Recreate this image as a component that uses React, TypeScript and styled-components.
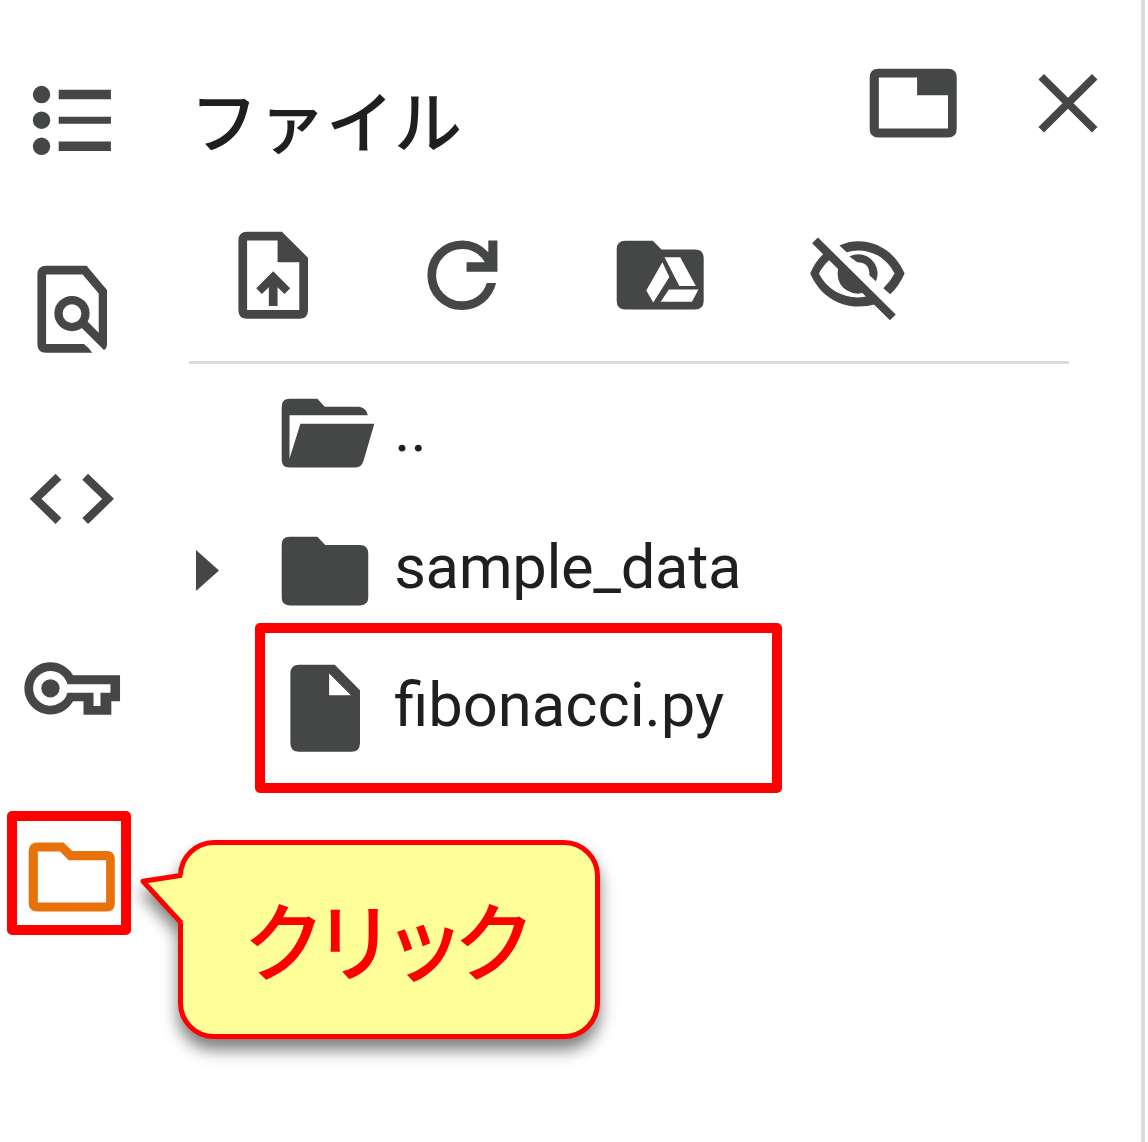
import React from "react";
import styled, { createGlobalStyle } from "styled-components";

const GlobalStyle = createGlobalStyle`
  body {
    margin: 0;
    background: #fff;
    overflow: hidden;
  }
`;

const ink = "#444746";
const red = "#ff0000";
const unit = 4.35;

const Page = styled.div`
  display: flex;
  width: 1148px;
  height: 1142px;
  background: #fff;
  color: #1f1f1f;
  font-family: Roboto, "Noto Sans CJK JP", sans-serif;
`;

const Rail = styled.nav`
  display: flex;
  flex-direction: column;
  width: 144px;
  padding-top: 25.4px;
  box-sizing: border-box;
`;

const RailItem = styled.div<{ $active?: boolean }>`
  position: relative;
  display: flex;
  align-items: center;
  justify-content: center;
  height: 189.2px;
  color: ${(p) => (p.$active ? "#e8710a" : ink)};
`;

const Glyph = styled.svg<{ $gap?: number }>`
  display: block;
  flex: none;
  width: ${24 * unit}px;
  height: ${24 * unit}px;
  margin-left: ${(p) => p.$gap ?? 0}px;
  fill: currentColor;
`;

const Marker = styled.div<{ $x: number; $y: number; $w: number; $h: number }>`
  position: absolute;
  left: ${(p) => p.$x}px;
  top: ${(p) => p.$y}px;
  width: ${(p) => p.$w}px;
  height: ${(p) => p.$h}px;
  box-sizing: border-box;
  border: 10px solid ${red};
  border-radius: 5px;
`;

const Panel = styled.main`
  display: flex;
  flex-direction: column;
  width: 1001px;
  height: 1142px;
  box-sizing: border-box;
  border-right: 4px solid #dddddd;
  color: ${ink};
`;

const Header = styled.header`
  display: flex;
  align-items: flex-start;
  height: 222.7px;
  box-sizing: border-box;
  padding: 50.8px 20.5px 0 46px;
`;

const Title = styled.h1`
  flex: 1;
  margin: 20px 0 0;
  color: #1f1f1f;
  font: 500 68px/96px "Noto Sans CJK JP", sans-serif;
`;

const Toolbar = styled.div`
  display: flex;
  height: 138.8px;
  padding-left: 77.1px;
`;

const Divider = styled.hr`
  flex: none;
  width: 880px;
  height: 3px;
  margin: 0 0 0 45px;
  border: 0;
  background: #dadada;
`;

const Row = styled.div`
  position: relative;
  display: flex;
  align-items: center;
  height: 137.3px;
  padding-left: 52.2px;
`;

const ArrowSlot = styled.span`
  display: flex;
  width: 76.6px;
`;

const Arrow = styled.svg`
  width: 23px;
  height: 41px;
  fill: currentColor;
`;

const Name = styled.span<{ $tracking?: string }>`
  margin: 0 0 6px 17px;
  color: #1f1f1f;
  font: 400 61.5px/80px Roboto, sans-serif;
  letter-spacing: ${(p) => p.$tracking ?? "normal"};
  white-space: nowrap;
`;

const Callout = styled.div`
  position: absolute;
  left: 178px;
  top: 840px;
  width: 422px;
  height: 199px;
  filter: drop-shadow(0 11px 8px rgba(0, 0, 0, 0.5));
`;

const Bubble = styled.div`
  display: flex;
  align-items: center;
  justify-content: center;
  height: 100%;
  box-sizing: border-box;
  border: 5px solid ${red};
  border-radius: 36px;
  background: #ffff99;
`;

const CalloutText = styled.span`
  margin: 0 12px 3px 0;
  color: ${red};
  font: 500 86px/120px "Noto Sans CJK JP", sans-serif;
  letter-spacing: -12.3px;
  transform: scaleX(0.95);
  white-space: nowrap;
`;

const Tail = styled.svg`
  position: absolute;
  left: -40px;
  top: 30px;
  width: 48px;
  height: 58px;
`;

type IconProps = { children: React.ReactNode; gap?: number };

const Icon = ({ children, gap }: IconProps) => (
  <Glyph viewBox="0 0 24 24" $gap={gap}>
    {children}
  </Glyph>
);

const ListIcon = () => (
  <Icon>
    <circle cx="4.95" cy="6.1" r="2" />
    <circle cx="4.95" cy="12" r="2" />
    <circle cx="4.95" cy="18" r="2" />
    <path d="M8.9 5h12v2.2h-12zM8.9 11.2h12v1.6h-12zM8.9 16.9h12v2.2h-12z" />
  </Icon>
);

const FindIcon = () => (
  <Icon>
    <path d="M6 2h9.3L20 7.6v12.4c0 .7-.2 1.1-.7 1.4l-5.5-5.5 1.5-1.3 2.8 2.8V8.4L14.4 4H6v16h8.7q1.1.8 1.9 2H6q-2 0-2-2V4q0-2 2-2z" />
    <circle cx="11.95" cy="13" r="3.1" fill="none" stroke="currentColor" strokeWidth="1.9" />
  </Icon>
);

const CodeIcon = () => (
  <Icon>
    <path
      d="M8.85 7.05 3.6 12.15l5.25 5.1M14.98 7.05 20.24 12.15l-5.26 5.1"
      fill="none"
      stroke="currentColor"
      strokeWidth="1.9"
    />
  </Icon>
);

const KeyIcon = () => (
  <Icon>
    <g transform="translate(0 .25)">
      <path
        fillRule="evenodd"
        d="M7 6a6 6 0 0 1 5.2 3H23v6h-2v3.1h-6.4V15h-2.4A6 6 0 1 1 7 6zm0 2a4 4 0 1 0 3.9 5h6v3.1h1.6V13H20.8v-1.9H10.9A4 4 0 0 0 7 8z"
      />
      <circle cx="7" cy="12" r="2.1" />
    </g>
  </Icon>
);

const FolderOutlineIcon = () => (
  <Icon>
    <path
      fillRule="evenodd"
      d="M4 4h6l2 2h8q1.8 0 1.8 2v10q0 1.9-1.8 1.9H4q-2 0-2-1.9V6q0-2 2-2zM4.1 6.1v11.7h15.7V8.1h-8.6l-2-2z"
    />
  </Icon>
);

const TabIcon = () => (
  <Icon>
    <path
      fillRule="evenodd"
      d="M4 4.1h16q2 0 2 2v11.8q0 2-2 2H4q-2 0-2-2V6.1q0-2 2-2zM4.1 6.1v11.7h15.9v-7.6h-7.1V6.1z"
    />
  </Icon>
);

const CloseIcon = () => (
  <Icon gap={50.4}>
    <path d="M5.8 5.9l12.3 12.2M18.1 5.9 5.8 18.1" fill="none" stroke="currentColor" strokeWidth="1.8" />
  </Icon>
);

const UploadIcon = () => (
  <Icon>
    <path
      fillRule="evenodd"
      d="M6 2h8l6 6v12q0 2-2 2H6q-2 0-2-2V4q0-2 2-2zm0 2v16h12V9h-5V4z"
    />
    <path d="M12 11.1 15.9 15l-1.3 1.3-1.6-1.5v4.3h-2v-4.3l-1.6 1.5L8.1 15z" />
  </Icon>
);

const RefreshIcon = () => (
  <Icon gap={84.4}>
    <path d="M12 20q-3.35 0-5.675-2.325T4 12t2.325-5.675T12 4q1.725 0 3.3.712T18 6.75V4h2.1v7.2H13V9h4.2q-.8-1.4-2.187-2.2T12 6Q9.5 6 7.75 7.75T6 12t1.75 4.25T12 18q1.925 0 3.475-1.1T17.65 13.8h2.15q-.75 2.85-2.9 4.525T12 20" />
  </Icon>
);

const DriveIcon = () => (
  <Icon gap={93.5}>
    <path d="M4 4.1h6.3l2 2H20q2 0 2 2v9.8q0 2-2 2H4q-2 0-2-2V6.1q0-2 2-2z" />
    <path
      fill="#fff"
      d="M13 7.9h3.6l3.6 6.6h-3.8zM12.5 9l1.6 3.4-3.7 5.9-1.6-2.8zM14 15.3h6.8l-1.5 2.8H12.1z"
    />
  </Icon>
);

const HiddenIcon = () => (
  <Icon gap={93.1}>
    <path d="M7.9 5.2Q10 4.2 12.2 4.2c4.7 0 8.6 2.7 10.7 7.4q-1.2 2.8-3.3 4.8l-1.6-1.4q1.6-1.5 2.6-3.4c-1.8-3.4-4.8-5.3-8.4-5.3q-1.3 0-2.6.4z" />
    <path d="M4.8 6.6Q2.4 8.6 1.2 11.6c2.1 4.8 6.2 7.6 11 7.6q2.3 0 4.2-.6l-1.9-1.8q-1.1.3-2.3.3c-3.9 0-7.2-2-9-5.5q1-2 2.9-3.5z" />
    <path d="M8 9.3q-.6 1.1-.5 2.3a4.6 4.6 0 0 0 6.9 4z" />
    <path d="M10.2 7.7q1-.5 2-.5a4.4 4.4 0 0 1 4.1 6.2L14.8 12q.1-3-2.8-3z" />
    <path d="M2.3 4l17.9 17.7" fill="none" stroke="currentColor" strokeWidth="1.9" />
  </Icon>
);

const OpenFolderIcon = () => (
  <Icon>
    <path d="M3.8 4.1h6.4l1.7 1.8h7.9q1.7.3 2 2H3.8v9.9L6.3 9.8h17l-2.5 8.6q-.5 1.5-1.8 1.5H3.8Q2 19.9 2 18.1V5.9q0-1.8 1.8-1.8z" />
  </Icon>
);

const FolderIcon = () => (
  <Icon>
    <path d="M3.8 4.3h6.4l1.8 1.9h8q1.9 0 1.9 2v10.1q0 1.8-1.9 1.8H3.8Q2 20.1 2 18.3V6.1q0-1.8 1.8-1.8z" />
  </Icon>
);

const FileIcon = () => (
  <Icon>
    <path
      fillRule="evenodd"
      d="M6 2h8.2L20 7.9V20q0 2-2 2H6q-2 0-2-2V4q0-2 2-2zm6.9 2v5h5z"
    />
  </Icon>
);

export default function App() {
  return (
    <Page>
      <GlobalStyle />
      <Rail>
        <RailItem><ListIcon /></RailItem>
        <RailItem><FindIcon /></RailItem>
        <RailItem><CodeIcon /></RailItem>
        <RailItem><KeyIcon /></RailItem>
        <RailItem $active>
          <FolderOutlineIcon />
          <Marker $x={7} $y={28.8} $w={124} $h={124} />
        </RailItem>
      </Rail>
      <Panel>
        <Header>
          <Title>ファイル</Title>
          <TabIcon />
          <CloseIcon />
        </Header>
        <Toolbar>
          <UploadIcon />
          <RefreshIcon />
          <DriveIcon />
          <HiddenIcon />
        </Toolbar>
        <Divider />
        <Row>
          <ArrowSlot />
          <OpenFolderIcon />
          <Name>..</Name>
        </Row>
        <Row>
          <ArrowSlot>
            <Arrow viewBox="0 0 23 41"><path d="M0 0v41l23-20.5z" /></Arrow>
          </ArrowSlot>
          <FolderIcon />
          <Name $tracking="-0.35px">sample_data</Name>
        </Row>
        <Row>
          <ArrowSlot />
          <FileIcon />
          <Name>fibonacci.py</Name>
          <Marker $x={111} $y={-16} $w={527} $h={170} />
        </Row>
      </Panel>
      <Callout>
        <Bubble>
          <CalloutText>クリック</CalloutText>
        </Bubble>
        <Tail viewBox="138 870 48 58">
          <path d="M184 875 143 881.3 181 922.5l3 0z" fill="#ffff99" />
          <path
            d="M182 875.2 143 881.3 181.3 923"
            fill="none"
            stroke={red}
            strokeWidth="5"
            strokeLinejoin="round"
          />
        </Tail>
      </Callout>
    </Page>
  );
}
